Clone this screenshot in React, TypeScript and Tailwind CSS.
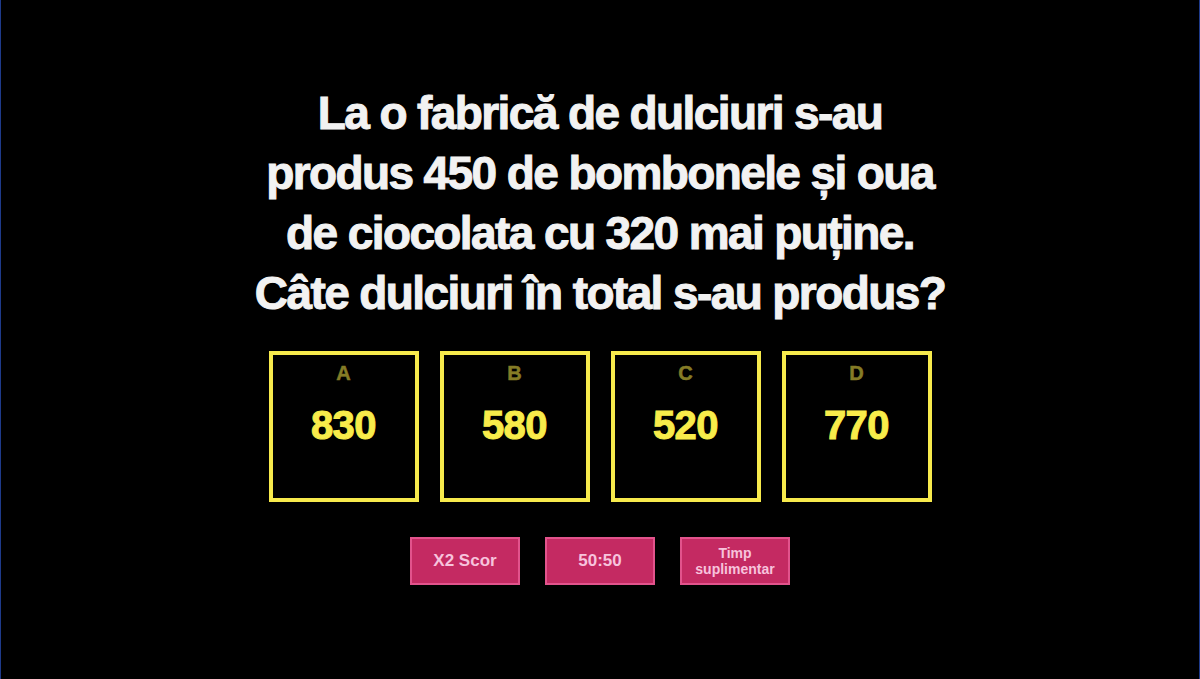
import React from "react";

const answers = [
  { letter: "A", value: "830" },
  { letter: "B", value: "580" },
  { letter: "C", value: "520" },
  { letter: "D", value: "770" },
];

const lines = [
  "La o fabrică de dulciuri s-au",
  "produs 450 de bombonele și oua",
  "de ciocolata cu 320 mai puține.",
  "Câte dulciuri în total s-au produs?",
];

const font = { fontFamily: '"Liberation Sans", Arial, sans-serif' };

export default function App() {
  return (
    <div
      className="w-[1200px] h-[679px] bg-black border-x border-[#1e3a8a] flex flex-col items-center overflow-hidden"
      style={font}
    >
      {/* Question */}
      <h1 className="mt-[83px] flex flex-col items-center text-[#f2f2f2] font-bold text-[46px] leading-[60px] tracking-[-1.6px] whitespace-nowrap [-webkit-text-stroke:1px_#f2f2f2]">
        {lines.map((l) => (
          <span key={l}>{l}</span>
        ))}
      </h1>

      {/* Answers */}
      <div className="mt-[28px] flex gap-[21px]">
        {answers.map((a) => (
          <div
            key={a.letter}
            className="w-[150px] h-[151px] border-[4px] border-[#f7ea4c] flex flex-col items-center"
          >
            <span className="mt-[6px] text-[20px] leading-[24px] font-bold text-[#857c26] [-webkit-text-stroke:0.5px_#857c26]">
              {a.letter}
            </span>
            <span className="mt-[18px] text-[40px] leading-[44px] font-bold tracking-[-0.5px] text-[#f8ec4a] [-webkit-text-stroke:1px_#f8ec4a]">
              {a.value}
            </span>
          </div>
        ))}
      </div>

      {/* Lifelines */}
      <div className="mt-[35px] flex gap-[25px]">
        <button className="w-[110px] h-[48px] bg-[#c42a62] border-2 border-[#e2538c] text-[#f7c3dc] font-bold text-[17px] leading-[20px]">
          X2 Scor
        </button>
        <button className="w-[110px] h-[48px] bg-[#c42a62] border-2 border-[#e2538c] text-[#f7c3dc] font-bold text-[17px] leading-[20px]">
          50:50
        </button>
        <button className="w-[110px] h-[48px] bg-[#c42a62] border-2 border-[#e2538c] text-[#f7c3dc] font-bold text-[14px] leading-[16px]">
          Timp
          <br />
          suplimentar
        </button>
      </div>
    </div>
  );
}
